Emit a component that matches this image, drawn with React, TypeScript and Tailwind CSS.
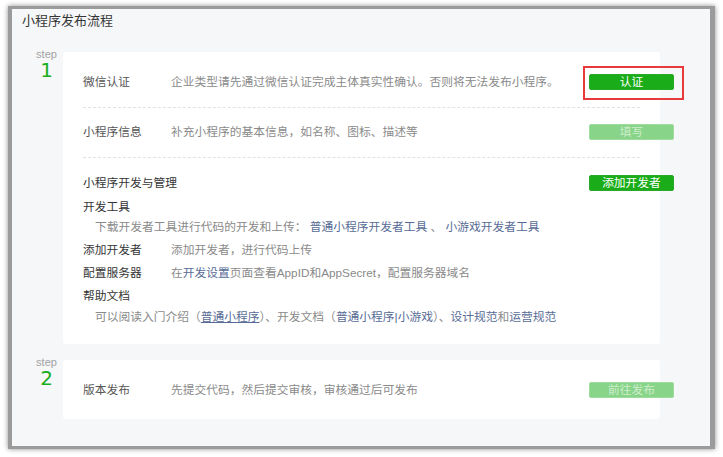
const font = { fontFamily: '"Liberation Sans", "Noto Sans CJK SC", sans-serif' };

const Btn = ({ label, disabled, outlined }: { label: string; disabled?: boolean; outlined?: boolean }) => (
  <div className="relative mr-[-34px] shrink-0">
    <div
      className={`flex h-[16px] w-[85px] items-center justify-center rounded-[2px] border text-[11.75px] leading-[14px] ${
        disabled ? 'border-[#9ddc9c] bg-[#88d488] text-white/60' : 'border-[#2aa829] bg-[#1aad19] text-white'
      }`}
    >
      {label}
    </div>
    {outlined && <div className="absolute -left-[6px] -top-[8px] h-[34px] w-[101px] border-2 border-[#e8393b]" />}
  </div>
);

const Row = ({
  label,
  desc,
  btn,
  disabled,
  outlined,
  className,
}: {
  label: string;
  desc: string;
  btn: string;
  disabled?: boolean;
  outlined?: boolean;
  className: string;
}) => (
  <div className={`flex h-[16px] box-content items-center leading-[16px] ${className}`}>
    <div className="w-[88px] shrink-0 text-[#555]">{label}</div>
    <div className="flex-1 text-[#8a8a8a]">{desc}</div>
    <Btn label={btn} disabled={disabled} outlined={outlined} />
  </div>
);

const Step = ({ n, children }: { n: number; children: React.ReactNode }) => (
  <div className="flex items-start">
    <div className="flex w-[27px] shrink-0 flex-col items-center">
      <div className="h-[12px] text-[11px] leading-[11px] text-[#a3a3a3]">step</div>
      <div className="h-[18px] text-[20px] leading-[18px] text-[#1aad19]" style={{ fontFamily: '"DejaVu Sans", sans-serif' }}>
        {n}
      </div>
    </div>
    <div className="mt-[3px] ml-[3px] w-[597px] rounded-[3px] bg-white px-[20px]">{children}</div>
  </div>
);

const A = ({ children, u }: { children: React.ReactNode; u?: boolean }) => (
  <span className={`text-[#576b95] ${u ? 'underline' : ''}`}>{children}</span>
);

export default function App() {
  return (
    <div className="h-[457px] w-[723px] overflow-hidden bg-white" style={font}>
      <div className="ml-[8px] mt-[6px] h-[443px] w-[707px] border-t-[3px] border-l-4 border-r-[5px] border-b-[3px] border-[#9b9b9b] bg-[#f6f7f9] shadow-[0_0_5px_rgba(0,0,0,0.45)]">
        <div className="pl-[10px] pt-[2px] text-[13px] leading-[20px] text-[#353535]">小程序发布流程</div>

        <div className="mt-[18px] flex flex-col gap-[13px] pl-[21px] text-[11.75px]">
          <Step n={1}>
            <Row
              className="pt-[22px] pb-[17px] border-b border-dashed border-[#e2e2e2]"
              label="微信认证"
              desc="企业类型请先通过微信认证完成主体真实性确认。否则将无法发布小程序。"
              btn="认证"
              outlined
            />
            <Row
              className="pt-[16px] pb-[17px] border-b border-dashed border-[#e2e2e2]"
              label="小程序信息"
              desc="补充小程序的基本信息，如名称、图标、描述等"
              btn="填写"
              disabled
            />
            <div className="pt-[17px] pb-[17px]">
              <div className="flex h-[16px] items-center leading-[16px]">
                <div className="flex-1 text-[#353535]">小程序开发与管理</div>
                <Btn label="添加开发者" />
              </div>
              <div className="mt-[6px] leading-[20px]">
                <div className="text-[#353535]">开发工具</div>
                <div className="pl-[12px] text-[#8a8a8a]">
                  下载开发者工具进行代码的开发和上传： <A>普通小程序开发者工具</A> 、 <A>小游戏开发者工具</A>
                </div>
                <div className="mt-[3px] flex">
                  <div className="w-[88px] shrink-0 text-[#353535]">添加开发者</div>
                  <div className="text-[#8a8a8a]">添加开发者，进行代码上传</div>
                </div>
                <div className="mt-[3px] flex">
                  <div className="w-[88px] shrink-0 text-[#353535]">配置服务器</div>
                  <div className="text-[#8a8a8a]">
                    在<A>开发设置</A>页面查看AppID和AppSecret，配置服务器域名
                  </div>
                </div>
                <div className="mt-[3px] text-[#353535]">帮助文档</div>
                <div className="mt-[1px] pl-[12px] text-[#8a8a8a]">
                  可以阅读入门介绍（<A u>普通小程序</A>）、开发文档（<A>普通小程序|小游戏</A>）、<A>设计规范</A>和<A>运营规范</A>
                </div>
              </div>
            </div>
          </Step>

          <Step n={2}>
            <Row
              className="pt-[22px] pb-[21px]"
              label="版本发布"
              desc="先提交代码，然后提交审核，审核通过后可发布"
              btn="前往发布"
              disabled
            />
          </Step>
        </div>
      </div>
    </div>
  );
}
